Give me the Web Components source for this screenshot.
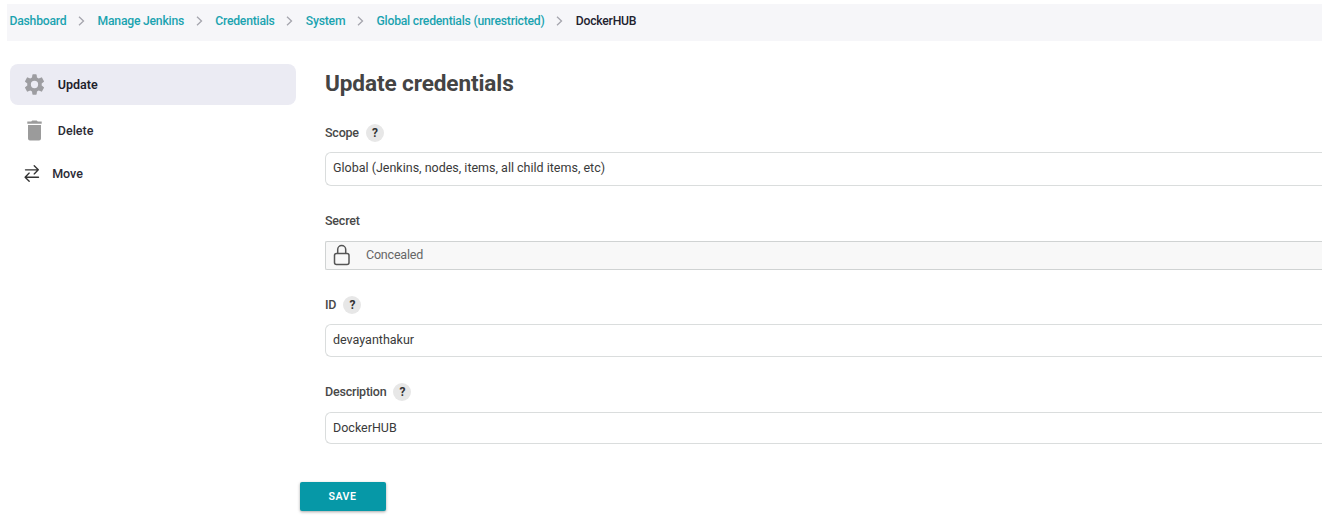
<!DOCTYPE html>
<html lang="en">
<head>
<meta charset="utf-8">
<title>Update credentials</title>
<style>
  body { margin: 0; background: #fff; overflow: hidden; font-family: Roboto, "Liberation Sans", sans-serif; font-size: 12.5px; color: #333; }
</style>
</head>
<body>
<credentials-page></credentials-page>
<script>
const define = (name, html) => customElements.define(name, class extends HTMLElement {
  constructor() {
    super();
    const t = document.createElement('template');
    t.innerHTML = html;
    this.attachShadow({ mode: 'open' }).append(t.content.cloneNode(true));
  }
});

define('crumb-link', `
<style>
  :host { display: flex; align-items: center; color: #1ba3b0; font-weight: 500; white-space: nowrap; letter-spacing: -.23px; }
  :host([current]) { color: #22222f; }
  svg { display: block; width: 7px; height: 10px; margin: 0 12.5px 0 11.7px; }
  :host([current]) svg { display: none; }
</style>
<slot></slot>
<svg viewBox="0 0 7 10" fill="none" stroke="#a5a5ad" stroke-width="1.3"><path d="M1 .8 5.5 5 1 9.2"/></svg>`);

define('crumb-bar', `
<style>
  :host { display: flex; align-items: center; height: 37px; box-sizing: border-box; padding: 0 0 3px 2.5px; background: #f6f6f9; font-size: 12.2px; }
</style>
<slot></slot>`);

define('side-task', `
<style>
  :host { display: flex; align-items: center; height: 41px; box-sizing: border-box; padding-left: 12.8px; gap: 12px; border-radius: 8px; color: #2b2b36; font-weight: 500; font-size: 12.5px; }
  :host([active]) { background: #ebebf3; color: #1f1f2c; font-weight: 600; }
  :host([compact]) { gap: 6.4px; }
  ::slotted(svg) { display: block; width: 23px; height: 23px; }
</style>
<slot name="icon"></slot><slot></slot>`);

define('help-badge', `
<style>
  :host { display: flex; align-items: center; justify-content: center; width: 18px; height: 18px; border-radius: 50%; background: #e7e7e7; color: #333; font-size: 12px; font-weight: 700; }
</style>?`);

define('form-field', `
<style>
  :host { display: block; }
  .label { display: flex; align-items: center; gap: 7px; height: 18px; margin-bottom: var(--gap, 10px); color: #484848; font-weight: 500; letter-spacing: -.22px; }
  .label ::slotted(span) { position: relative; top: -1px; }
  .box { display: flex; align-items: center; height: var(--h, 34px); box-sizing: border-box; padding: 0 7px var(--shift, 3px); border: 1.5px solid #dadddd; border-right: 0; border-radius: 6px 0 0 6px; color: #3a3a3a; }
  :host([secret]) .box { background: #f8f8f8; border-color: #d0d3d3; border-radius: 2px 0 0 2px; color: #666; letter-spacing: -.2px; }
  ::slotted(svg) { display: block; width: 18px; height: 22px; margin-right: 15px; }
</style>
<div class="label"><slot name="label"></slot><slot name="help"></slot></div>
<div class="box"><slot></slot></div>`);

define('save-button', `
<style>
  :host { display: block; width: 86px; }
  button { display: block; width: 100%; height: 29px; padding: 0; border: 0; border-radius: 2px; background: #0698a7; color: #fff; font: 600 10.6px Roboto, "Liberation Sans", sans-serif; letter-spacing: .45px; box-shadow: 0 1px 3px rgba(0,0,0,.35); }
</style>
<button><slot></slot></button>`);

define('credentials-page', `
<style>
  :host { display: block; height: 517px; box-sizing: border-box; padding: 4px 6px 0 7px; overflow: hidden; }
  .body { display: grid; grid-template-columns: 285.5px 1fr; column-gap: 4px; padding-left: 3px; }
  nav { padding-top: 23px; }
  side-task + side-task { margin-top: 5px; }
  side-task[compact] { margin-top: 2px !important; }
  main { padding-top: 29px; }
  .fields { padding-left: 25.5px; }
  h1 { margin: 0 0 26px; height: 28px; line-height: 28px; font-size: 22.6px; font-weight: 700; letter-spacing: -.12px; color: #444; }
  save-button { margin-top: 37.7px; }
  .f2 { margin-top: 26px; --gap: 11px; --h: 28.5px; --shift: 1px; }
  .f3 { margin-top: 26.5px; --h: 33px; --shift: 2px; }
  .f4 { margin-top: 26px; --gap: 11px; --h: 32px; --shift: 2px; }
</style>
<crumb-bar>
  <crumb-link>Dashboard</crumb-link><crumb-link>Manage Jenkins</crumb-link><crumb-link>Credentials</crumb-link><crumb-link>System</crumb-link><crumb-link>Global credentials (unrestricted)</crumb-link><crumb-link current>DockerHUB</crumb-link>
</crumb-bar>
<div class="body">
  <nav>
    <side-task active><svg slot="icon" viewBox="0 0 24 24" fill="#9d9da1"><path d="M19.5 13a8 8 0 0 0 0-2l2.3-1.8a.6.6 0 0 0 .1-.7l-2.1-3.7a.6.6 0 0 0-.7-.2l-2.7 1.1a8 8 0 0 0-1.8-1L14.200 1.800a.6.6 0 0 0-.6-.5h-3.200a.6.6 0 0 0-.6.5L9.400 4.700a8 8 0 0 0-1.800 1L4.900 4.600a.6.6 0 0 0-.7.2L2.100 8.500a.6.6 0 0 0 .1.7L4.500 11a8 8 0 0 0 0 2l-2.300 1.800a.6.6 0 0 0-.1.7l2.100 3.700c.1.200.4.300.7.200l2.700-1.100a8 8 0 0 0 1.800 1l.4 2.900c0 .3.300.5.600.5h3.200c.3 0 .600-.2.600-.5l.4-2.900a8 8 0 0 0 1.800-1l2.700 1.100c.3.100.6 0 .7-.2l2.100-3.700a.6.6 0 0 0-.1-.7zM12 15.800a3.800 3.800 0 1 1 0-7.600 3.800 3.800 0 0 1 0 7.600z" fill-rule="evenodd"/></svg>Update</side-task>
    <side-task><svg slot="icon" viewBox="0 0 23 23" fill="#9b9b9b"><path d="M5 6h13v13.500a2 2 0 0 1-2 2H7a2 2 0 0 1-2-2zM4.300 2.600h3.900L9.300 1.500h4.400l1.100 1.100h3.900v2.100H4.300z"/></svg>Delete</side-task>
    <side-task compact><svg slot="icon" viewBox="0 0 23 23" fill="none" stroke="#333" stroke-width="1.350" stroke-linecap="round" stroke-linejoin="round"><path d="M2.500 7.800H15M11.200 3.700l4.100 4.100-4.100 4.100M15.500 15.200H2.500M6.200 11.100l-4.100 4.100 4.100 4.100"/></svg>Move</side-task>
  </nav>
  <main>
    <div class="fields">
      <h1>Update credentials</h1>
      <form-field><span slot="label">Scope</span><help-badge slot="help"></help-badge>Global (Jenkins, nodes, items, all child items, etc)</form-field>
      <form-field class="f2" secret><span slot="label">Secret</span><svg viewBox="0 0 18 22" fill="none" stroke="#555" stroke-width="1.500"><rect x="1.500" y="9.500" width="14.500" height="11" rx="2"/><path d="M4.700 9.500V5.500a4 4 0 0 1 8 0v4"/></svg>Concealed</form-field>
      <form-field class="f3"><span slot="label">ID</span><help-badge slot="help"></help-badge>devayanthakur</form-field>
      <form-field class="f4"><span slot="label">Description</span><help-badge slot="help"></help-badge>DockerHUB</form-field>
    </div>
    <save-button>SAVE</save-button>
  </main>
</div>`);
</script>
</body>
</html>
